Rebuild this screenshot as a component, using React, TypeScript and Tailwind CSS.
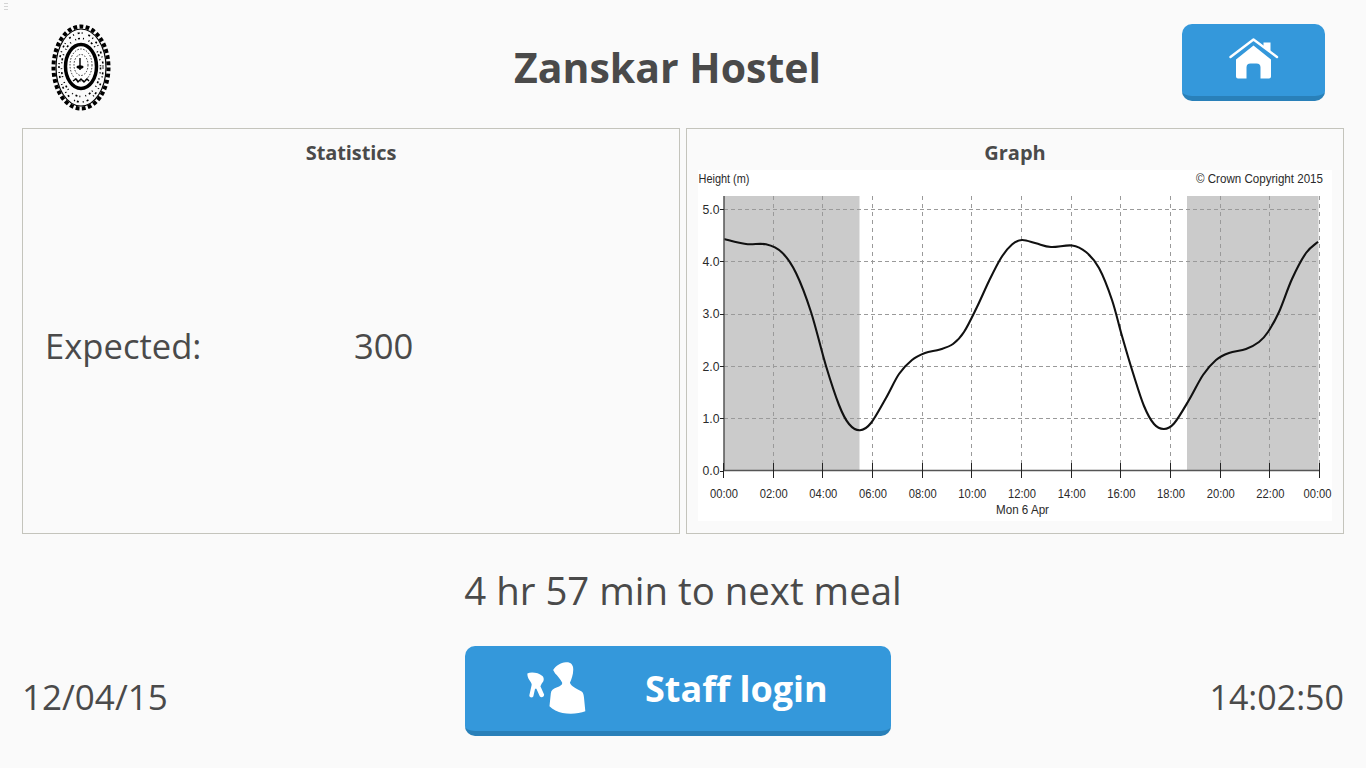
const font = "font-['Open_Sans',sans-serif]";

const hours = ["00:00", "02:00", "04:00", "06:00", "08:00", "10:00", "12:00", "14:00", "16:00", "18:00", "20:00", "22:00", "00:00"];
const levels = ["5.0", "4.0", "3.0", "2.0", "1.0", "0.0"];

const tide: [number, number][] = [
    [724, 239], [746, 244], [766, 244.3], [782, 252.5], [796, 273], [811, 312], [826, 366], [839, 405], [849, 424],
    [860, 430.3], [871, 423], [886, 398], [899, 374], [912, 360], [925, 353], [940, 349.5], [953, 344], [964, 332],
    [977, 307], [989, 281], [1001, 258], [1012, 244.5], [1022, 240], [1036, 243.3], [1051, 247], [1072, 245.5],
    [1086, 252], [1099, 268], [1112, 300], [1122, 336], [1133, 373], [1144, 406], [1154, 424], [1164, 429],
    [1174, 423.5], [1189, 400], [1203, 375], [1216, 360], [1229, 353], [1246, 349], [1259, 342], [1268, 332],
    [1279, 312], [1292, 279], [1306, 253], [1318, 241.7],
];

function smoothPath(pts: [number, number][]) {
    let d = `M${pts[0][0]} ${pts[0][1]}`;
    for (let i = 0; i < pts.length - 1; i++) {
        const p0 = pts[Math.max(i - 1, 0)];
        const p1 = pts[i];
        const p2 = pts[i + 1];
        const p3 = pts[Math.min(i + 2, pts.length - 1)];
        const c1x = p1[0] + (p2[0] - p0[0]) / 6;
        const c1y = p1[1] + (p2[1] - p0[1]) / 6;
        const c2x = p2[0] - (p3[0] - p1[0]) / 6;
        const c2y = p2[1] - (p3[1] - p1[1]) / 6;
        d += ` C${c1x.toFixed(1)} ${c1y.toFixed(1)} ${c2x.toFixed(1)} ${c2y.toFixed(1)} ${p2[0]} ${p2[1]}`;
    }
    return d;
}

function TideChart() {
    const xAt = (i: number) => 724 + i * 49.67;
    const yAt = (i: number) => 209 + i * 52.35;
    const chartText = { fontFamily: "'Liberation Sans', sans-serif", fontSize: 13, fill: "#2a2a2a" };
    return (
        <svg viewBox="698 170 634 351" className="w-[634px] h-[351px] bg-white block overflow-visible">
            <rect x="724" y="196" width="135.5" height="274" fill="#cbcbcb" />
            <rect x="1187" y="196" width="131.5" height="274" fill="#cbcbcb" />
            {hours.map((_, i) =>
                i > 0 ? (
                    <line key={i} x1={Math.round(xAt(i)) - 0.5} x2={Math.round(xAt(i)) - 0.5} y1="196" y2="470" stroke="#9a9a9a" strokeDasharray="4 4" />
                ) : null
            )}
            {levels.slice(0, 5).map((_, i) => (
                <line key={i} x1="724" x2="1319" y1={Math.round(yAt(i)) + 0.5} y2={Math.round(yAt(i)) + 0.5} stroke="#9a9a9a" strokeDasharray="4 3" />
            ))}
            <path d={smoothPath(tide)} fill="none" stroke="#111" strokeWidth="2.1" />
            <line x1="724" x2="724" y1="196" y2="471" stroke="#555" strokeWidth="1.5" />
            <line x1="724" x2="1320" y1="470.5" y2="470.5" stroke="#555" strokeWidth="1.5" />
            {levels.map((l, i) => (
                <g key={l}>
                    <line x1="720" x2="724" y1={Math.round(yAt(i)) + 0.5} y2={Math.round(yAt(i)) + 0.5} stroke="#222" />
                    <text x="719.500" y={yAt(i) + 4.5} textAnchor="end" {...chartText} textLength="17" lengthAdjust="spacingAndGlyphs">{l}</text>
                </g>
            ))}
            {hours.map((h, i) => (
                <g key={i}>
                    <line x1={Math.round(xAt(i)) - 0.5} x2={Math.round(xAt(i)) - 0.5} y1="463" y2="478" stroke="#222" />
                    <text x={i === 12 ? 1303.5 : xAt(i) - 14} y="498" {...chartText} textLength="28" lengthAdjust="spacingAndGlyphs">{h}</text>
                </g>
            ))}
            <text x="996" y="513.5" {...chartText} textLength="53" lengthAdjust="spacingAndGlyphs">Mon 6 Apr</text>
            <text x="698.5" y="182.5" {...chartText} textLength="51" lengthAdjust="spacingAndGlyphs">Height (m)</text>
            <text x="1196" y="182.5" {...chartText} textLength="127" lengthAdjust="spacingAndGlyphs">© Crown Copyright 2015</text>
        </svg>
    );
}

function Logo() {
    return (
        <svg viewBox="0 0 60 87" className="w-[60px] h-[87px] block">
            <ellipse cx="30" cy="43.5" rx="27.5" ry="41" fill="none" stroke="#000" strokeWidth="4" strokeDasharray="3.800 2.400" />
            <ellipse cx="30" cy="43.5" rx="25" ry="38.5" fill="none" stroke="#000" strokeWidth="1.2" />
            <ellipse cx="30" cy="43.5" rx="22" ry="34.5" fill="none" stroke="#000" strokeWidth="1.6" strokeDasharray="1 4 2 2 1 6 2 3" />
            <ellipse cx="30" cy="43.5" rx="19.5" ry="29" fill="none" stroke="#000" strokeWidth="1.6" strokeDasharray="2 3 1 5 1 2" />
            <ellipse cx="30" cy="42.5" rx="15.5" ry="22" fill="#fff" stroke="#000" strokeWidth="3.500" />
            <ellipse cx="30" cy="41" rx="11" ry="16" fill="none" stroke="#000" strokeWidth="0.8" strokeDasharray="1.5 1.5" />
            <ellipse cx="30" cy="41" rx="7" ry="10.500" fill="none" stroke="#000" strokeWidth="0.8" strokeDasharray="1.5 1.5" />
            <ellipse cx="29" cy="43" rx="3.5" ry="1.800" fill="#000" />
            <path d="M29 34v12M22 57l3-2 2 3 3-3 3 3 3-3 2 2" fill="none" stroke="#000" strokeWidth="1.4" />
        </svg>
    );
}

function HomeIcon() {
    return (
        <svg viewBox="0 0 50 42" className="w-[50px] h-[42px] block">
            <path d="M1.5 20 24.5 2.5 48 20" fill="none" stroke="#fff" strokeWidth="2.4" strokeLinecap="round" strokeLinejoin="round" />
            <path d="M34.5 5.5h7v9.5l-7-5.500z" fill="#fff" />
            <path d="M24.500 8.500 42 22.500v17a2 2 0 0 1-2 2h-8.500v-11a4 4 0 0 0-4-4h-6a4 4 0 0 0-4 4v11H9a2 2 0 0 1-2-2v-17z" fill="#fff" />
        </svg>
    );
}

// keys and staff silhouette, traced at 3x
function StaffIcon() {
    return (
        <svg viewBox="210 60 185 170" className="w-[62px] h-[57px] block">
            <path fill="#fff" d="M217 100C228 95 250 97 262 108C268 114 267 124 260 130L256 138L267 163C268 170 258 174 254 168L244 146L240 146L235 168C232 174 222 172 223 165L230 134C230 128 226 124 222 118C219 113 217 107 217 100Z" />
            <path fill="#fff" d="M294 90C302 78 316 68 332 67C346 66 354 74 354 88C354 104 348 118 344 128C348 138 362 146 378 153C385 158 385 165 386 172L390 213C372 220 345 222 322 218C308 215 292 208 283 198L287 160C288 150 294 146 304 142C316 138 322 134 321 128C317 118 306 106 300 100Z" />
        </svg>
    );
}

export default function App() {
    return (
        <div className={`relative w-[1366px] h-[768px] overflow-hidden bg-[#fafafa] text-[#4a4a4a] ${font}`}>
            <div className="absolute left-1 top-[3px] flex flex-col gap-[2px]">
                <div className="w-1 h-px bg-[#d4d4d4]" />
                <div className="w-1 h-px bg-[#d4d4d4]" />
                <div className="w-1 h-px bg-[#d4d4d4]" />
            </div>

            <header className="flex items-start h-[128px]">
                <div className="w-[152px] pl-[51px] pt-[24px] shrink-0">
                    <Logo />
                </div>
                <h1 className="flex-1 text-center text-[41px] leading-[56px] font-bold pt-[39px] pl-[1px]">Zanskar Hostel</h1>
                <button className="mt-[24px] mr-[41px] w-[143px] h-[77px] rounded-[10px] bg-[#3498db] border-b-[5px] border-[#2980b9] flex items-center justify-center pb-1">
                    <HomeIcon />
                </button>
            </header>

            <main className="flex gap-[6px] px-[22px] h-[406px]">
                <section className="w-[658px] flex flex-col border border-[#c4c4bc]">
                    <h2 className="text-center text-[20px] leading-[28px] font-bold pt-[10px] tracking-[-0.1px]">Statistics</h2>
                    <div className="flex-1 flex items-center pl-[22px] pb-[8px] text-[34.600px]">
                        <span className="w-[309px]">Expected:</span>
                        <span>300</span>
                    </div>
                </section>
                <section className="w-[658px] flex flex-col border border-[#c4c4bc] pl-[11px]">
                    <h2 className="text-center text-[20px] leading-[28px] font-bold pt-[10px] h-[41px] -ml-[11px]">Graph</h2>
                    <TideChart />
                </section>
            </main>

            <p className="text-center text-[38.400px] leading-[50px] mt-[31px]">4 hr 57 min to next meal</p>

            <footer className="flex items-center justify-between px-[22px] mt-[31px]">
                <span className="text-[35px] pt-[12px] w-[195px]">12/04/15</span>
                <button className="w-[426px] h-[90px] rounded-[10px] bg-[#3498db] border-b-[5px] border-[#2980b9] flex items-center text-white pl-[60px]">
                    <StaffIcon />
                    <span className="ml-[58px] text-[36px] font-bold">Staff login</span>
                </button>
                <span className="text-[34px] pt-[12px] w-[205px] text-right">14:02:50</span>
            </footer>
        </div>
    );
}
